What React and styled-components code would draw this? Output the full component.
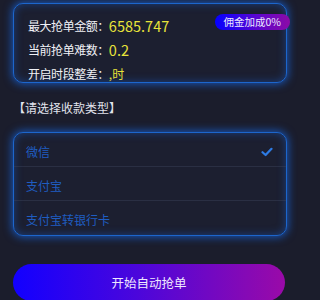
import React from "react";
import styled, { createGlobalStyle } from "styled-components";

const GlobalStyle = createGlobalStyle`
  html, body {
    margin: 0;
    padding: 0;
    background: #1b1d2c;
  }
  body {
    font-family: "Noto Sans CJK SC", "Noto Sans", sans-serif;
    width: 300px;
    height: 300px;
    overflow: hidden;
  }
`;

const Page = styled.div`
  padding: 3px 13px 0 13px;
  display: flex;
  flex-direction: column;
`;

const Card = styled.div`
  position: relative;
  box-sizing: border-box;
  border: 1.5px solid #1d66cc;
  border-radius: 10px;
  background: #1c1f30;
  box-shadow: 0 0 9px 1px rgba(24, 98, 214, 0.85),
    inset 0 0 8px rgba(24, 98, 214, 0.5);
`;

const InfoCard = styled(Card)`
  height: 80px;
  padding: 9px 0 0 14px;
`;

const Row = styled.div`
  display: flex;
  align-items: center;
  height: 24px;
`;

const Label = styled.span`
  color: #f0f1f6;
  font-size: 12px;
  letter-spacing: -0.45px;
`;

const Value = styled.span`
  color: #e8e33a;
  font-size: ${(p) => (p.small ? "12px" : "14.5px")};
`;

const Badge = styled.div`
  position: absolute;
  top: 10px;
  right: -4px;
  height: 16px;
  padding: 0 9px;
  border-radius: 8px;
  background: linear-gradient(90deg, #0400ff 0%, #5a06d0 55%, #8c0aa6 100%);
  color: #ece8ff;
  font-size: 10.5px;
  line-height: 16px;
`;

const SectionTitle = styled.div`
  color: #e2e4ec;
  font-size: 12px;
  margin: 15px 0 0 0;
  height: 20px;
  line-height: 20px;
`;

const ListCard = styled(Card)`
  margin-top: 14px;
  display: flex;
  flex-direction: column;
`;

const Option = styled.div`
  display: flex;
  align-items: center;
  justify-content: space-between;
  height: 34px;
  padding: 4px 13px 0 12px;
  box-sizing: border-box;
  color: #1f5dc2;
  font-size: 12px;
  border-bottom: 1px solid ${(p) => (p.last ? "transparent" : "rgba(60, 66, 90, 0.45)")};
`;

const Check = () => (
  <svg width="12" height="10" viewBox="0 0 12 10">
    <path d="M1.5 5.2 L4.6 8 L10.5 1.8" fill="none" stroke="#2d7be4" strokeWidth="2.2" strokeLinecap="round" strokeLinejoin="round" />
  </svg>
);

const StartButton = styled.button`
  margin-top: 28px;
  margin-right: 2px;
  height: 37px;
  border: none;
  border-radius: 19px;
  background: linear-gradient(90deg, #1200ff 0%, #4a06dc 45%, #9a0aa8 100%);
  color: #eee8ff;
  font-family: "Noto Sans CJK SC", "Noto Sans", sans-serif;
  font-size: 12.5px;
  padding: 0;
`;

const options = ["微信", "支付宝", "支付宝转银行卡"];

export default function App() {
  return (
    <>
      <GlobalStyle />
      <Page>
        <InfoCard>
          <Row>
            <Label>最大抢单金额：</Label>
            <Value>6585.747</Value>
          </Row>
          <Row>
            <Label>当前抢单难数：</Label>
            <Value>0.2</Value>
          </Row>
          <Row>
            <Label>开启时段整差：</Label>
            <Value small>,时</Value>
          </Row>
          <Badge>佣金加成0%</Badge>
        </InfoCard>
        <SectionTitle>【请选择收款类型】</SectionTitle>
        <ListCard>
          {options.map((o, i) => (
            <Option key={o} last={i === options.length - 1}>
              <span>{o}</span>
              {i === 0 && <Check />}
            </Option>
          ))}
        </ListCard>
        <StartButton>开始自动抢单</StartButton>
      </Page>
    </>
  );
}
